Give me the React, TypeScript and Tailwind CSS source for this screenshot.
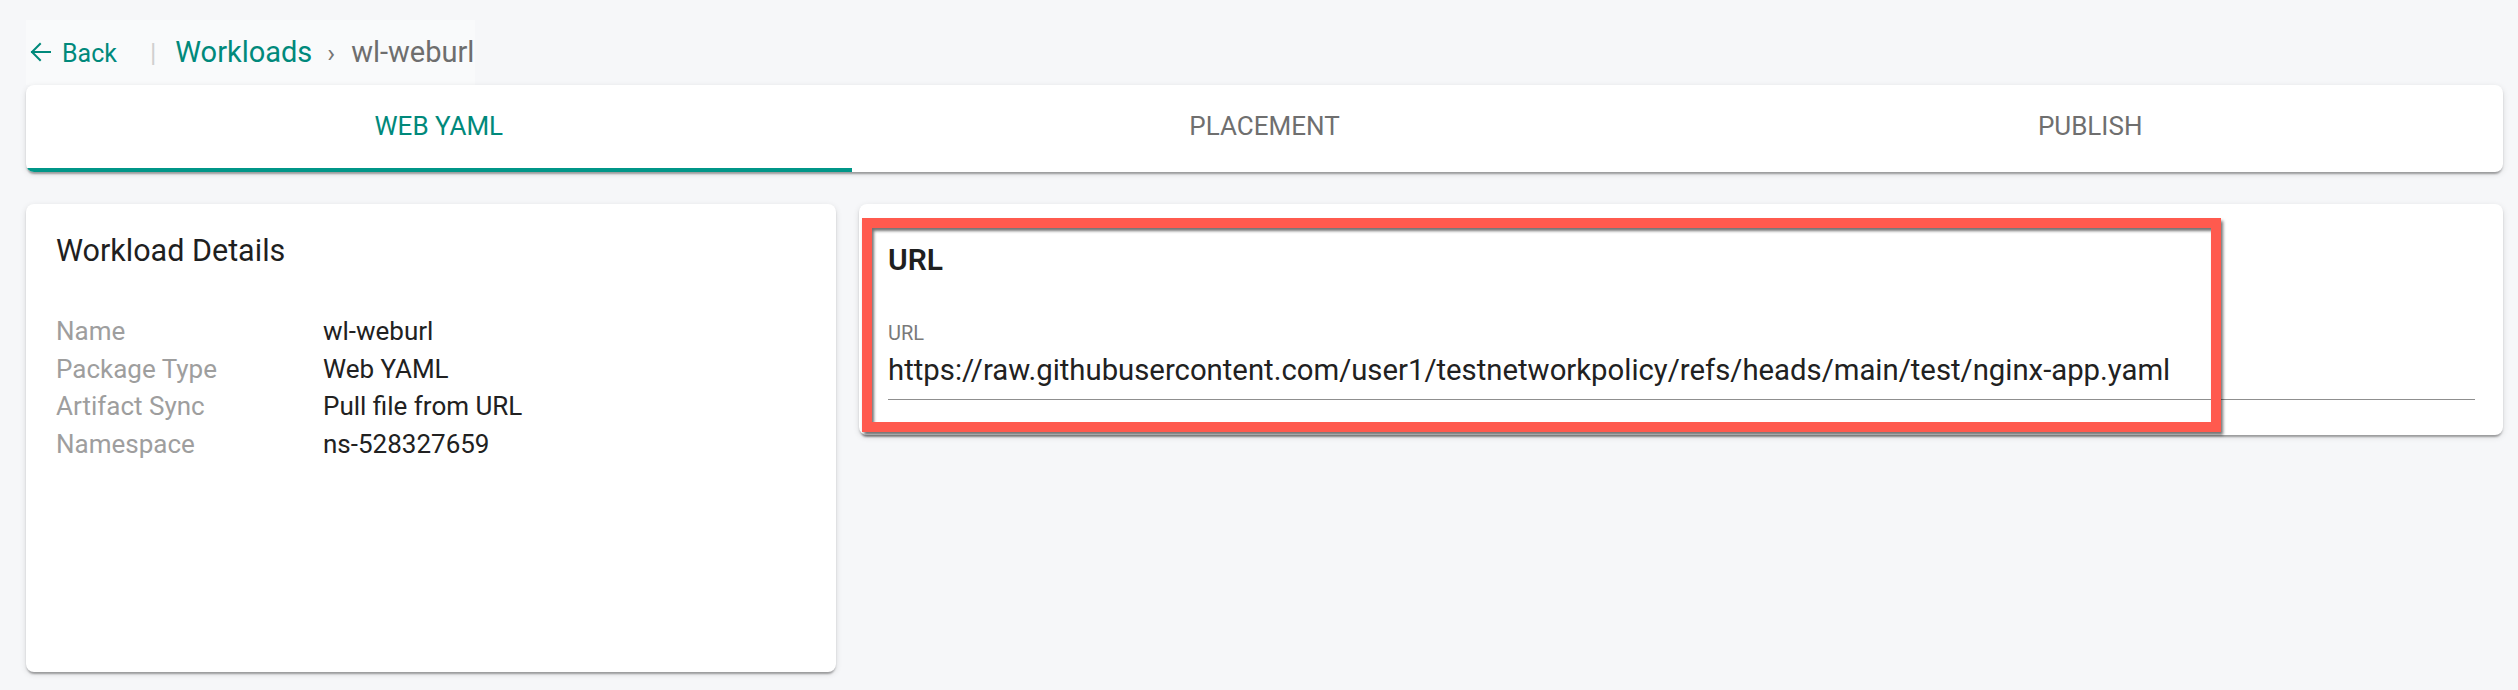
import React from 'react';

const details: [string, string][] = [
  ['Name', 'wl-weburl'],
  ['Package Type', 'Web YAML'],
  ['Artifact Sync', 'Pull file from URL'],
  ['Namespace', 'ns-528327659'],
];

const tabs = ['WEB YAML', 'PLACEMENT', 'PUBLISH'];

const BackArrow = () => (
  <svg width="21" height="20" viewBox="0 0 21 20" fill="none" stroke="#00897b" strokeWidth="2" strokeLinecap="square">
    <path d="M20 10H2" />
    <path d="M10 2L2 10L10 18" />
  </svg>
);

export default function App() {
  return (
    <div className="min-h-screen bg-[#f6f7f9] pl-[26px] pr-[15px] pt-[20px] font-[Roboto,sans-serif]">
      {/* Breadcrumb */}
      <div className="flex h-[65px] w-[449px] items-baseline whitespace-nowrap bg-[#f9fafb] pl-[4px] pt-[14px] leading-[36px]">
        <BackArrow />
        <span className="ml-[11px] text-[25px] text-[#00897b]">Back</span>
        <span className="ml-[33px] text-[26px] text-[#d0d0d0]">|</span>
        <span className="ml-[19px] text-[29px] text-[#00897b]">Workloads</span>
        <span className="ml-[15px] text-[26px] text-[#757575]">›</span>
        <span className="ml-[16px] text-[29px] text-[#6e6e6e]">wl-weburl</span>
      </div>

      {/* Tabs */}
      <div className="flex h-[87px] overflow-hidden rounded-[8px] bg-white shadow-[0_4px_2px_-2px_rgba(0,0,0,0.2),0_2px_2px_rgba(0,0,0,0.14),0_2px_6px_rgba(0,0,0,0.12)]">
        {tabs.map((t, i) => (
          <div
            key={t}
            className={`flex flex-1 items-center justify-center border-b-[4px] text-[26px] ${
              i === 0 ? 'border-[#009688] text-[#00897b]' : 'border-transparent text-[#6f6f6f]'
            }`}
          >
            {t}
          </div>
        ))}
      </div>

      {/* Content */}
      <div className="mt-[32px] flex items-start gap-[23px]">
        <div className="h-[468px] w-[810px] rounded-[8px] bg-white px-[30px] pt-[29px] shadow-[0_4px_2px_-2px_rgba(0,0,0,0.2),0_2px_2px_rgba(0,0,0,0.14),0_2px_6px_rgba(0,0,0,0.12)]">
          <div className="text-[30.5px] leading-[36px] text-[#1f1f1f]">Workload Details</div>
          <div className="mt-[44px] grid grid-cols-[267px_1fr] text-[26px] leading-[37.5px]">
            {details.map(([k, v]) => (
              <React.Fragment key={k}>
                <div className="text-[#9e9e9e]">{k}</div>
                <div className="text-[#212121]">{v}</div>
              </React.Fragment>
            ))}
          </div>
        </div>

        <div className="relative flex-1 rounded-[8px] bg-white pl-[29px] pr-[28px] pt-[38px] pb-[35px] shadow-[0_4px_2px_-2px_rgba(0,0,0,0.2),0_2px_2px_rgba(0,0,0,0.14),0_2px_6px_rgba(0,0,0,0.12)]">
          <div className="text-[30px] font-semibold leading-[36px] text-[#1f1f1f]">URL</div>
          <div className="mt-[43px] text-[20px] leading-[24px] text-[#7a7a7a]">URL</div>
          <div className="mt-[7px] whitespace-nowrap border-b border-[#8f8f8f] pb-[11px] text-[29.3px] leading-[36px] text-[#212121]">
            https://raw.githubusercontent.com/user1/testnetworkpolicy/refs/heads/main/test/nginx-app.yaml
          </div>

          {/* annotation highlight */}
          <div className="pointer-events-none absolute left-[3px] top-[14px] h-[214px] w-[1359px] border-[10px] border-[#ff5a4e] shadow-[2px_3px_3px_rgba(0,0,0,0.55),inset_2px_3px_3px_rgba(0,0,0,0.55)]" />
        </div>
      </div>
    </div>
  );
}
